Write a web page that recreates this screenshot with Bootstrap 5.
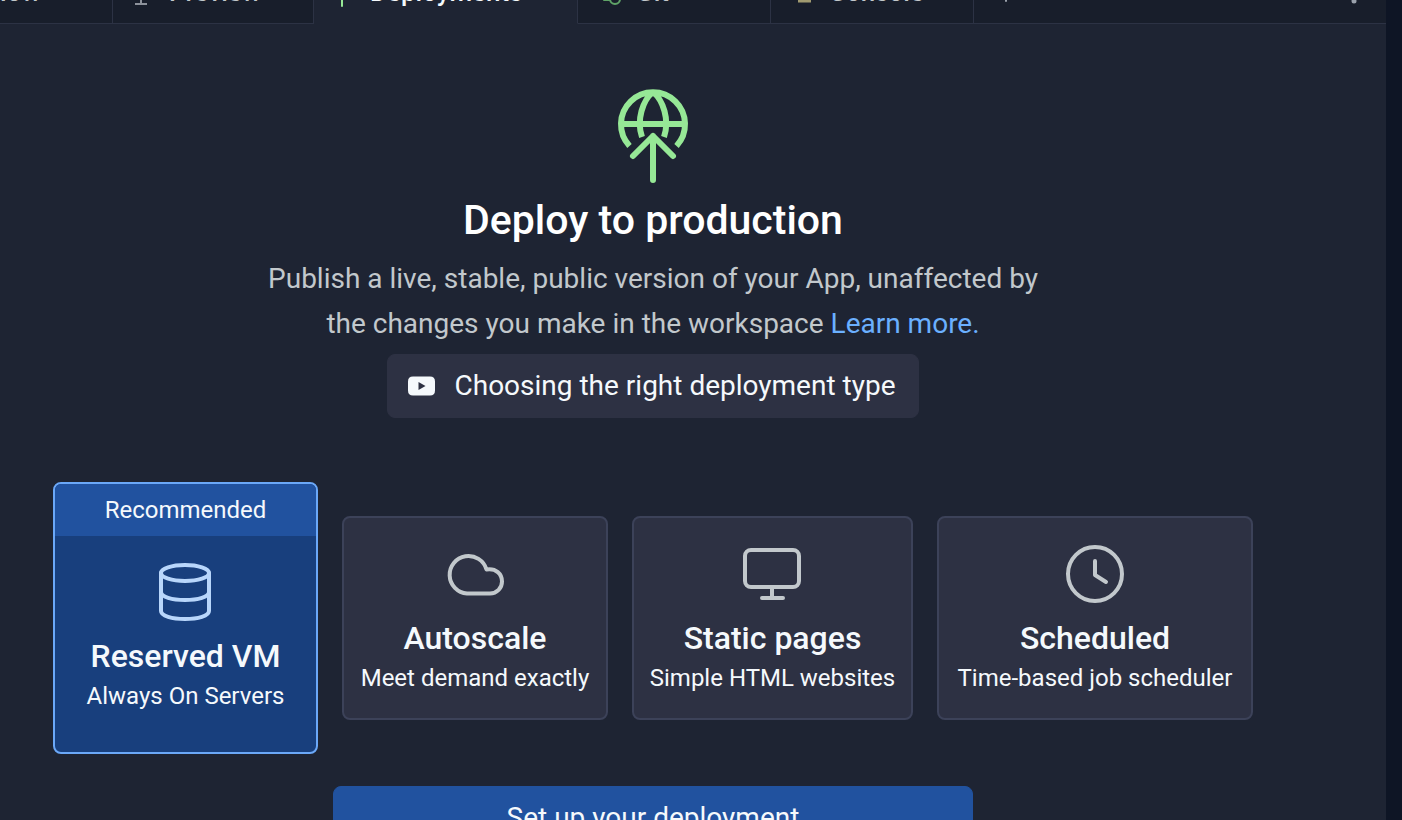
<!DOCTYPE html>
<html lang="en" data-bs-theme="dark">
<head>
<meta charset="utf-8">
<meta name="viewport" content="width=device-width, initial-scale=1">
<title>Deployments</title>
<link href="https://cdn.jsdelivr.net/npm/bootstrap@5.3.0/dist/css/bootstrap.min.css" rel="stylesheet">
<style>
  body { background: #0e1525; color: #f5f9fc; font-family: Roboto, "Liberation Sans", sans-serif; font-size: 28px; line-height: 44px; }
  .workspace { height: 100vh; padding-right: 16px; }
  .pane { background: #1e2433; }
  .tab-strip { height: 24px; flex: none; background: #181e2b; }
  .tab-item { height: 64px; padding: 0 20px; gap: 20px; font-size: 26px; font-weight: 500; line-height: 32px; color: #c2c8cc; text-decoration: none; border-right: 1px solid #2c3244; border-bottom: 1px solid #2c3244; flex: none; }
  .tab-item.active { background: #1e2433; border-bottom-color: #1e2433; color: #f5f9fc; }
  .tab-rest { border-bottom: 1px solid #2c3244; height: 64px; }
  .tab-tool { background: none; border: 0; color: #9aa1ac; line-height: 32px; padding: 0 20px; }
  .tab-item.w-first { width: 113px; padding-left: 0; } .w-preview { width: 201px; } .w-deploy { width: 264px; } .w-git { width: 193px; } .w-console { width: 203px; }
  .tab-item.w-git, .tab-item.w-console { gap: 12px; padding-left: 22px; }
  .deploy-body { padding: 64px 133px 0 53px; }
  .deploy-title { font-size: 41px; line-height: 56px; font-weight: 500; margin: 8px 0; }
  .deploy-lead { max-width: 800px; line-height: 45px; color: #c2c8cc; margin-bottom: 8px; }
  .deploy-lead a { color: #6bb0ff; text-decoration: none; }
  .video-btn { --bs-btn-bg: #2d3143; --bs-btn-color: #f5f9fc; --bs-btn-border-color: #2d3143; --bs-btn-hover-bg: #3c435a; font-size: 28px; line-height: 32px; height: 64px; padding: 0 22px 0 18px; gap: 16px; border-radius: 8px; }
  .plans { display: grid; grid-template-columns: 265fr 266fr 281fr 316fr; gap: 24px; margin: 64px 0 32px; width: 100%; }
  .plan { background: #2d3143; border: 2px solid #3c4259; border-radius: 8px; color: #f5f9fc; padding: 0; overflow: hidden; white-space: nowrap; }
  .plan-body { padding: 24px 0; }
  .plan-body svg { color: #c2c8cc; }
  .plan-name { font-size: 32px; line-height: 48px; font-weight: 500; margin-top: 8px; }
  .plan-note { font-size: 24px; line-height: 32px; }
  .plan.chosen { background: #183f7d; border-color: #6ba8f8; }
  .plan.chosen .plan-body { padding: 24px 0 40px; }
  .plan.chosen svg { color: #b8d6fb; }
  .plan-flag { background: #21529f; font-size: 24px; line-height: 52px; }
  .setup-btn { --bs-btn-bg: #21529f; --bs-btn-border-color: #21529f; --bs-btn-color: #f5f9fc; font-size: 28px; height: 64px; line-height: 32px; border-radius: 8px; width: 100%; max-width: 640px; }
  svg { display: block; flex: none; fill: none; stroke: currentColor; stroke-linecap: round; stroke-linejoin: round; }
  .ink-green { color: #96e896; } .ink-git { color: #5fa367; } .ink-sand { color: #a09a70; } .ink-grey { color: #8d929b; }
  .butt { stroke-linecap: butt; }
  .solid { fill: currentColor; stroke: none; }
</style>
</head>
<body>
<div class="workspace overflow-hidden">
  <main class="pane h-100 overflow-hidden d-flex flex-column">
    <nav class="tab-strip d-flex align-items-end overflow-hidden" aria-label="Workspace tabs">
      <a href="#" class="tab-item w-first d-flex align-items-center">low</a>
      <a href="#" class="tab-item w-preview d-flex align-items-center">
        <svg class="ink-grey butt" width="16" height="28" viewBox="0 0 16 28" stroke-width="2"><path d="M-4 6h24v12H-4zM8 18v8M2 26h12"/></svg>Preview</a>
      <a href="#" class="tab-item active w-deploy d-flex align-items-center" aria-current="page">
        <svg class="ink-green" width="16" height="32" viewBox="0 0 16 32" stroke-width="2"><circle cx="8" cy="10" r="9"/><path d="M8 14v16M3 19l5-5 5 5"/></svg>Deployments</a>
      <a href="#" class="tab-item w-git d-flex align-items-center">
        <svg class="ink-git" width="24" height="28" viewBox="0 0 24 28" stroke-width="2"><circle cx="6" cy="6" r="4"/><circle cx="15" cy="21" r="5"/><path d="M4 22h6M6 10v7"/></svg>Git</a>
      <a href="#" class="tab-item w-console d-flex align-items-center">
        <svg class="ink-sand butt" width="24" height="24" viewBox="0 0 24 24" stroke-width="3"><path d="M3 5l7 6-7 6M5 21h13"/></svg>Console</a>
      <div class="tab-rest d-flex flex-fill align-items-center justify-content-between">
        <button type="button" class="tab-tool" aria-label="New tab"><svg width="24" height="24" viewBox="0 0 24 24" stroke-width="2"><path d="M12 3v18M3 12h18"/></svg></button>
        <button type="button" class="tab-tool" aria-label="More"><svg class="solid" width="24" height="28" viewBox="0 0 24 28"><circle cx="12" cy="3" r="2.500"/><circle cx="12" cy="13" r="2.500"/><circle cx="12" cy="23" r="2.500"/></svg></button>
      </div>
    </nav>
    <section class="deploy-body d-flex flex-column align-items-center text-center">
      <svg class="ink-green" width="72" height="96" viewBox="0 0 72 96" stroke-width="6" aria-hidden="true">
        <path class="butt" d="M12.500 58A32 32 0 1 1 59.500 58M4 36h64M36 4C26 12 19 32 25 49M36 4C46 12 53 32 47 49"/>
        <path d="M36 48v44M16 68l20-20 20 20"/>
      </svg>
      <h1 class="deploy-title">Deploy to production</h1>
      <p class="deploy-lead">Publish a live, stable, public version of your App, unaffected by the changes you make in the workspace <a href="#">Learn more.</a></p>
      <button type="button" class="btn video-btn d-flex align-items-center">
        <svg class="solid" width="32" height="32" viewBox="0 0 32 32" aria-hidden="true"><path fill-rule="evenodd" d="M7 6.500h17q5 0 5 5v9q0 5-5 5H7q-5 0-5-5v-9q0-5 5-5zM12.500 12v8l7-4z"/></svg>
        Choosing the right deployment type
      </button>
      <div class="plans align-items-center">
        <button type="button" class="plan chosen">
          <div class="plan-flag">Recommended</div>
          <div class="plan-body">
            <svg class="mx-auto" width="64" height="64" viewBox="0 0 64 64" stroke-width="4"><ellipse cx="31" cy="13" rx="24" ry="8"/><path d="M7 13v38c0 5 11 8 24 8s24-3 24-8V13M7 32c0 5 11 8 24 8s24-3 24-8"/></svg>
            <div class="plan-name">Reserved VM</div>
            <div class="plan-note">Always On Servers</div>
          </div>
        </button>
        <button type="button" class="plan">
          <div class="plan-body">
            <svg class="mx-auto" width="64" height="64" viewBox="0 0 64 64" stroke-width="4"><path d="M24 51.500A18.800 18.800 0 1 1 43.500 27.500C53 26 59 32 59 39.500 59 46 54 51.500 47 51.500Z"/></svg>
            <div class="plan-name">Autoscale</div>
            <div class="plan-note">Meet demand exactly</div>
          </div>
        </button>
        <button type="button" class="plan">
          <div class="plan-body">
            <svg class="mx-auto" width="64" height="64" viewBox="0 0 64 64" stroke-width="4"><rect x="4" y="8" width="54" height="37" rx="6"/><path d="M31 45v11M21 56h21"/></svg>
            <div class="plan-name">Static pages</div>
            <div class="plan-note">Simple HTML websites</div>
          </div>
        </button>
        <button type="button" class="plan">
          <div class="plan-body">
            <svg class="mx-auto" width="64" height="64" viewBox="0 0 64 64" stroke-width="4"><circle cx="32" cy="32" r="27"/><path d="M32 19v14l11 7"/></svg>
            <div class="plan-name">Scheduled</div>
            <div class="plan-note">Time-based job scheduler</div>
          </div>
        </button>
      </div>
      <button type="button" class="btn setup-btn">Set up your deployment</button>
    </section>
  </main>
</div>
<script src="https://cdn.jsdelivr.net/npm/bootstrap@5.3.0/dist/js/bootstrap.bundle.min.js"></script>
</body>
</html>
